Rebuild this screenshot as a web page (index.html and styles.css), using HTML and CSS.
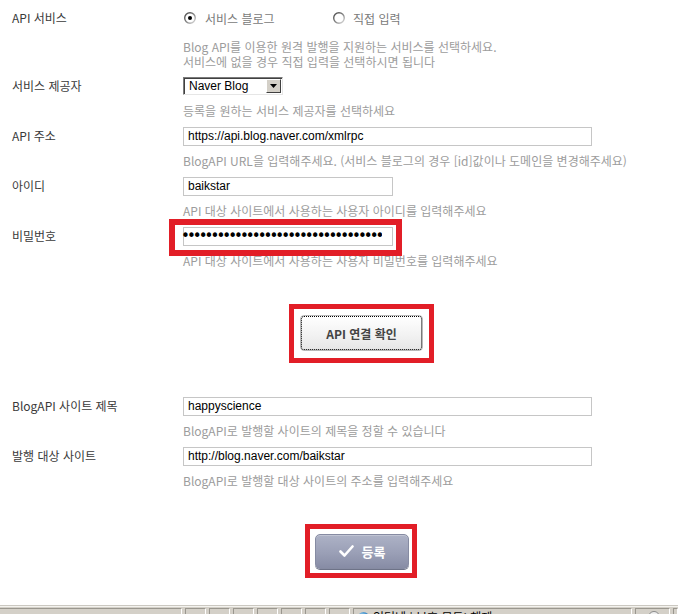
FILE: index.html
```html
<!DOCTYPE html>
<html lang="ko">
<head>
<meta charset="utf-8">
<title>BlogAPI 설정</title>
<link rel="stylesheet" href="styles.css">
</head>
<body>
<main class="page">
  <div class="row">
    <div class="label">API 서비스</div>
    <div class="field">
      <div class="control radios">
        <label class="radio radio-first">
          <svg class="radio-icon" width="12" height="12" viewBox="0 0 12 12"><defs><linearGradient id="rg1" x1="0" y1="0" x2="1" y2="1"><stop offset="0" stop-color="#444"/><stop offset="0.55" stop-color="#888"/><stop offset="1" stop-color="#e4e4e4"/></linearGradient></defs><circle cx="6" cy="6" r="5.3" fill="#fff" stroke="url(#rg1)" stroke-width="1.4"/><circle cx="6" cy="6" r="2" fill="#000"/></svg>
          서비스 블로그
        </label>
        <label class="radio">
          <svg class="radio-icon" width="12" height="12" viewBox="0 0 12 12"><defs><linearGradient id="rg2" x1="0" y1="0" x2="1" y2="1"><stop offset="0" stop-color="#444"/><stop offset="0.55" stop-color="#888"/><stop offset="1" stop-color="#e4e4e4"/></linearGradient></defs><circle cx="6" cy="6" r="5.3" fill="#fff" stroke="url(#rg2)" stroke-width="1.4"/></svg>
          직접 입력
        </label>
      </div>
      <p class="help help-first">Blog API를 이용한 원격 발행을 지원하는 서비스를 선택하세요.<br>서비스에 없을 경우 직접 입력을 선택하시면 됩니다</p>
    </div>
  </div>

  <div class="row">
    <div class="label">서비스 제공자</div>
    <div class="field">
      <div class="control">
        <div class="select"><span class="select-value">Naver Blog</span><span class="select-btn"><svg width="7" height="4" viewBox="0 0 7 4"><path d="M0 0h7L3.5 4z" fill="#000"/></svg></span></div>
      </div>
      <p class="help">등록을 원하는 서비스 제공자를 선택하세요</p>
    </div>
  </div>

  <div class="row">
    <div class="label">API 주소</div>
    <div class="field">
      <div class="control"><div class="input input-wide">https://api.blog.naver.com/xmlrpc</div></div>
      <p class="help">BlogAPI URL을 입력해주세요. (서비스 블로그의 경우 [id]값이나 도메인을 변경해주세요)</p>
    </div>
  </div>

  <div class="row">
    <div class="label">아이디</div>
    <div class="field">
      <div class="control"><div class="input input-short">baikstar</div></div>
      <p class="help">API 대상 사이트에서 사용하는 사용자 아이디를 입력해주세요</p>
    </div>
  </div>

  <div class="row">
    <div class="label">비밀번호</div>
    <div class="field">
      <div class="control"><div class="input input-short input-pass annot annot-pass"><span class="dots">••••••••••••••••••••••••••••••••••</span></div></div>
      <p class="help">API 대상 사이트에서 사용하는 사용자 비밀번호를 입력해주세요</p>
    </div>
  </div>

  <div class="button-row">
    <button class="btn-check annot annot-check" type="button">API 연결 확인</button>
  </div>

  <div class="row">
    <div class="label">BlogAPI 사이트 제목</div>
    <div class="field">
      <div class="control"><div class="input input-wide">happyscience</div></div>
      <p class="help">BlogAPI로 발행할 사이트의 제목을 정할 수 있습니다</p>
    </div>
  </div>

  <div class="row">
    <div class="label">발행 대상 사이트</div>
    <div class="field">
      <div class="control"><div class="input input-wide">http://blog.naver.com/baikstar</div></div>
      <p class="help">BlogAPI로 발행할 대상 사이트의 주소를 입력해주세요</p>
    </div>
  </div>

  <div class="button-row button-row-submit">
    <button class="btn-submit annot annot-submit" type="button"><svg class="check" width="15" height="12" viewBox="0 0 15 12"><path d="M1.5 6.5 L5.5 10.5 L13.5 1.5" fill="none" stroke="#fff" stroke-width="2.6" stroke-linecap="round" stroke-linejoin="round"/></svg>등록</button>
  </div>
</main>

<footer class="status">
  <div class="panel panel-main"></div>
  <div class="panel panel-s"></div>
  <div class="panel panel-s"></div>
  <div class="panel panel-s"></div>
  <div class="panel panel-s"></div>
  <div class="panel panel-s"></div>
  <div class="panel panel-s"></div>
  <div class="panel panel-s"></div>
  <div class="panel panel-zone"><span class="globe"></span>인터넷 | 보호 모드: 해제</div>
  <div class="panel panel-zoom"><span class="zoom-icon"></span></div>
  <div class="panel panel-end"></div>
</footer>
</body>
</html>
```

FILE: styles.css
```css
html, body {
  margin: 0;
  padding: 0;
}

body {
  height: 614px;
  overflow: hidden;
  display: grid;
  grid-template-rows: 605px 1fr;
  background: #fff;
  font-family: "Noto Sans CJK KR", "Liberation Sans", sans-serif;
  font-size: 12px;
  color: #3c3c3c;
}

.page {
  padding-top: 8px;
}

.row {
  display: grid;
  grid-template-columns: 171px 1fr;
  padding-left: 12px;
}

.label {
  height: 20px;
  line-height: 20px;
  color: #3a3a3a;
  white-space: nowrap;
}

.field {
  min-width: 0;
}

.control {
  height: 20px;
  display: flex;
  align-items: center;
}

.help {
  margin: 7px 0 8px;
  line-height: 15px;
  color: #9c9c9c;
  white-space: nowrap;
}

.help-first {
  margin: 11px 0 7px;
}

/* radios */
.radios {
  padding-left: 1px;
}

.radio {
  display: flex;
  align-items: center;
  gap: 8px;
  color: #7a7a7a;
  white-space: nowrap;
}

.radio-first {
  width: 149px;
  gap: 9px;
}

.radio-icon {
  flex: none;
}

/* select */
.select {
  box-sizing: border-box;
  width: 100px;
  height: 18px;
  display: flex;
  align-items: center;
  justify-content: space-between;
  border: 1px solid;
  border-color: #7b7b7b #e6e6e6 #e6e6e6 #7b7b7b;
  box-shadow: inset 1px 1px 0 #404040;
  background: #fff;
  padding: 0 1px 0 5px;
  font-family: "Liberation Sans", Arial, sans-serif;
  font-size: 12px;
  color: #000;
}

.select-btn {
  box-sizing: border-box;
  width: 15px;
  height: 14px;
  display: flex;
  align-items: center;
  justify-content: center;
  background: #d4d0c8;
  border: 1px solid;
  border-color: #fff #404040 #404040 #fff;
}

/* text inputs */
.input {
  box-sizing: border-box;
  height: 19px;
  border: 1px solid #c6c6c6;
  padding: 0 4px;
  line-height: 17px;
  font-family: "Liberation Sans", Arial, sans-serif;
  font-size: 12px;
  color: #000;
  background: #fff;
  white-space: nowrap;
  overflow: hidden;
}

.input-wide {
  width: 409px;
}

.input-short {
  width: 210px;
}

.input-pass {
  padding: 0;
  display: flex;
  align-items: center;
}

.dots {
  display: block;
  margin-left: -3px;
  font-family: "DejaVu Sans", sans-serif;
  font-size: 15px;
  line-height: 17px;
  letter-spacing: -2.95px;
  white-space: nowrap;
  overflow: hidden;
  max-width: 207px;
}

/* red annotation boxes */
.annot {
  position: relative;
}

.annot::after {
  content: "";
  position: absolute;
  border: 6px solid #e21e27;
  pointer-events: none;
}

.annot-pass {
  overflow: visible;
}

.annot-pass::after {
  left: -15px;
  right: -10px;
  top: -9px;
  bottom: -11px;
}

.annot-check::after {
  border-width: 5px;
  left: -12px;
  right: -12px;
  top: -12px;
  bottom: -13px;
}

.annot-submit::after {
  border-width: 5px;
  left: -11px;
  right: -9px;
  top: -11px;
  bottom: -10px;
}

/* buttons */
.button-row {
  display: flex;
  padding: 39px 0 45px 300px;
}

.button-row-submit {
  padding: 38px 0 0 315px;
}

.btn-check {
  box-sizing: border-box;
  width: 123px;
  height: 36px;
  margin: 0;
  padding: 0;
  border: 1px solid #b8b8b8;
  border-radius: 4px;
  background: linear-gradient(#ffffff, #f1f1f1 60%, #e6e6e6);
  outline: 1px dotted #000;
  outline-offset: -2px;
  font-family: "Noto Sans CJK KR", "Liberation Sans", sans-serif;
  font-size: 12px;
  font-weight: bold;
  color: #444;
}

.btn-submit {
  box-sizing: border-box;
  width: 94px;
  height: 35px;
  margin: 0;
  padding: 0 0 1px;
  display: flex;
  align-items: center;
  justify-content: center;
  gap: 8px;
  border: 1px solid #868ba2;
  border-radius: 5px;
  background: linear-gradient(#adb2c6, #9a9fb6 55%, #878ca5);
  box-shadow: inset 0 1px 0 rgba(255,255,255,0.25), 0 1px 0 #6e7388;
  font-family: "Noto Sans CJK KR", "Liberation Sans", sans-serif;
  font-size: 13px;
  font-weight: bold;
  color: #fff;
}

.check {
  flex: none;
}

/* status bar */
.status {
  display: flex;
  gap: 3px;
  padding-top: 1px;
  border-top: 1px solid #cbc8c1;
  box-shadow: inset 0 1px 0 #f4f3ef;
  background: #d4d0c8;
}

.panel {
  box-sizing: border-box;
  height: 20px;
  margin-top: 1px;
  border-top: 1px solid #9a978f;
  border-left: 1px solid #9a978f;
  border-right: 1px solid #fff;
  font-size: 12px;
  line-height: 14px;
  color: #000;
  white-space: nowrap;
  overflow: hidden;
}

.panel-main {
  width: 182px;
  border-left: none;
}

.panel-s {
  width: 21px;
}

.panel-zone {
  width: 279px;
  display: flex;
  align-items: flex-start;
  gap: 4px;
  padding: 1px 0 0 4px;
}

.globe {
  flex: none;
  width: 11px;
  height: 11px;
  margin-top: 2px;
  border-radius: 50%;
  background: radial-gradient(circle at 35% 35%, #9fd3f0, #2d7fc0 60%, #3a8a3a);
}

.panel-zoom {
  width: 35px;
  padding: 2px 0 0 12px;
}

.zoom-icon {
  display: block;
  width: 10px;
  height: 10px;
  border-radius: 50%;
  border: 1px solid #8a8a8a;
  background: #eee;
}

.panel-end {
  flex: 1;
}
```
